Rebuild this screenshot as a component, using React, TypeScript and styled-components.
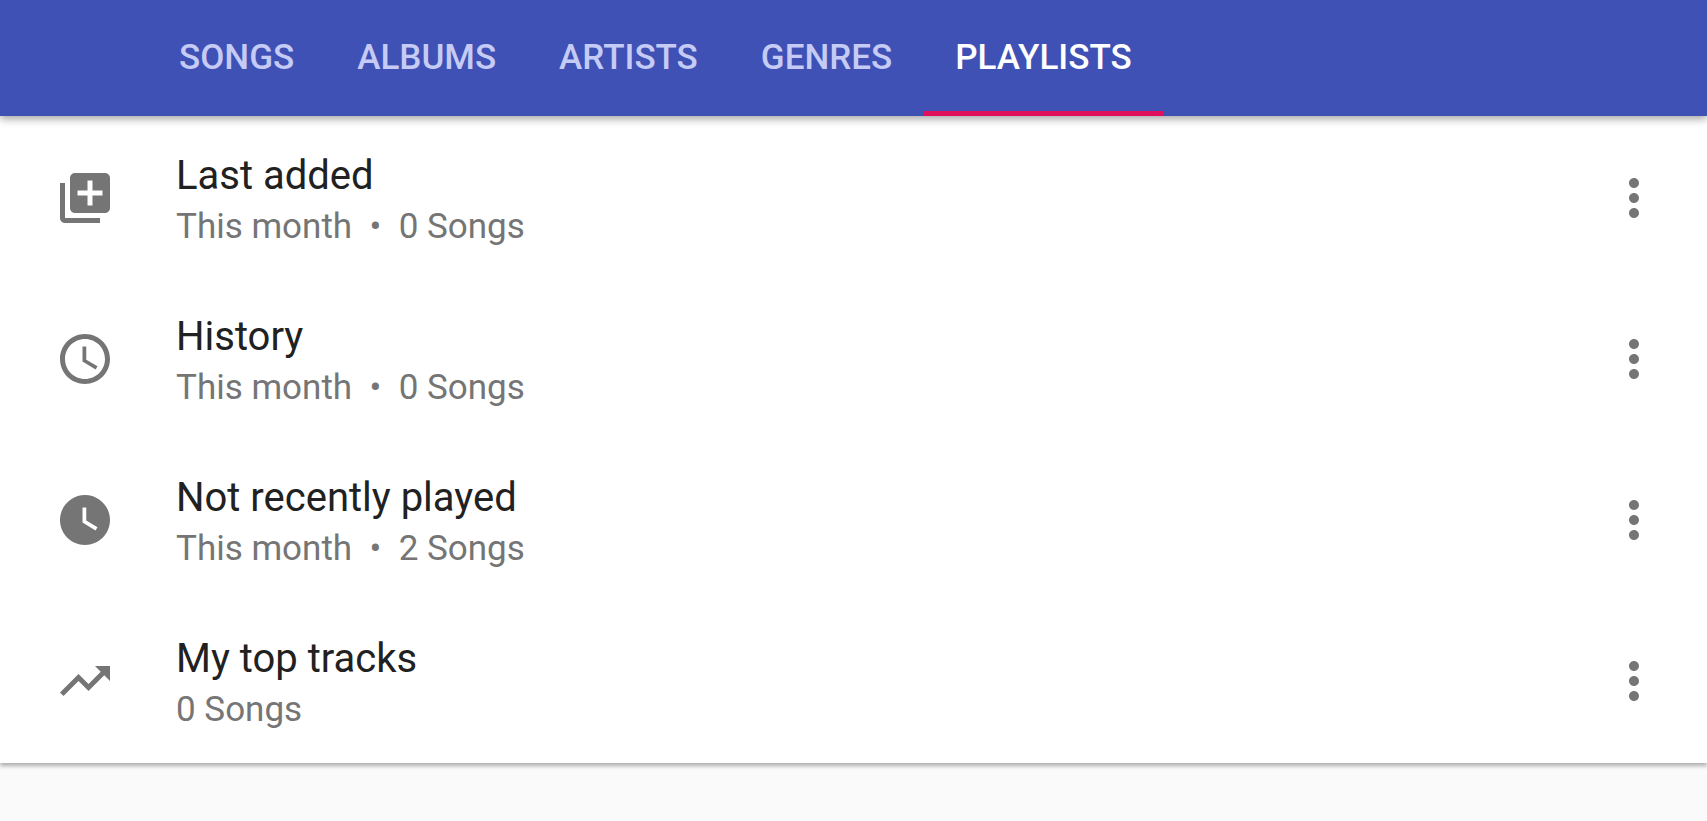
import React, { useState } from 'react';
import styled, { createGlobalStyle } from 'styled-components';

const GlobalStyle = createGlobalStyle`
  *, *::before, *::after { box-sizing: border-box; }
  body {
    margin: 0;
    background: #fafafa;
    font-family: Roboto, "Liberation Sans", sans-serif;
    color: #212121;
  }
`;

const Page = styled.div`
  min-height: 100vh;
  background: #fafafa;
`;

const Header = styled.header`
  position: relative;
  z-index: 2;
  background: #3f51b5;
  box-shadow: 0 3px 8px rgba(0, 0, 0, 0.36);
`;

const TabBar = styled.nav`
  display: flex;
  gap: 1px;
  height: 116px;
  padding-left: 148px;
`;

const Tab = styled.button<{ $active: boolean }>`
  padding: 4px 31px 0;
  border: 0;
  border-bottom: 5px solid ${({ $active }) => ($active ? '#e0105c' : 'transparent')};
  background: none;
  color: ${({ $active }) => ($active ? '#ffffff' : '#c5cbf5')};
  font: 500 35px/40px Roboto, "Liberation Sans", sans-serif;
  text-transform: uppercase;
  cursor: pointer;
`;

const List = styled.ul`
  position: relative;
  z-index: 1;
  margin: 0;
  padding: 1px 0 2px;
  list-style: none;
  background: #ffffff;
  box-shadow: 0 3px 4px rgba(0, 0, 0, 0.3);
`;

const Row = styled.li`
  display: flex;
  align-items: center;
  height: 161px;
  padding: 0 43px 0 55px;
`;

const Icon = styled.svg`
  display: block;
  flex: none;
  width: 60px;
  height: 60px;
  fill: #757575;
`;

const RowText = styled.div`
  flex: 1;
  min-width: 0;
  padding-left: 61px;
`;

const Title = styled.div`
  font-size: 40px;
  line-height: 58px;
`;

const Subtitle = styled.div`
  font-size: 35px;
  line-height: 44px;
  color: #757575;
  white-space: pre;
`;

const MenuButton = styled.button`
  padding: 0;
  border: 0;
  background: none;
  cursor: pointer;
`;

const TABS = ['Songs', 'Albums', 'Artists', 'Genres', 'Playlists'];

const PLAYLISTS = [
  {
    title: 'Last added',
    detail: 'This month\u00a0 •\u00a0 0 Songs',
    icon: 'M4 6H2v14c0 1.1.9 2 2 2h14v-2H4V6zm16-4H8c-1.1 0-2 .9-2 2v12c0 1.1.9 2 2 2h12c1.1 0 2-.9 2-2V4c0-1.1-.9-2-2-2zm-1 9h-4v4h-2v-4H9V9h4V5h2v4h4v2z',
  },
  {
    title: 'History',
    detail: 'This month\u00a0 •\u00a0 0 Songs',
    icon: 'M11.99 2C6.47 2 2 6.48 2 12s4.47 10 9.99 10C17.52 22 22 17.52 22 12S17.52 2 11.99 2zM12 20c-4.42 0-8-3.58-8-8s3.58-8 8-8 8 3.58 8 8-3.58 8-8 8zm.5-13H11v6l5.25 3.15.75-1.23-4.5-2.67z',
  },
  {
    title: 'Not recently played',
    detail: 'This month\u00a0 •\u00a0 2 Songs',
    icon: 'M12 2C6.5 2 2 6.5 2 12s4.5 10 10 10 10-4.5 10-10S17.5 2 12 2zm4.2 14.2L11 13V7h1.5v5.2l4.5 2.7-.8 1.3z',
  },
  {
    title: 'My top tracks',
    detail: '0 Songs',
    icon: 'M16 6l2.29 2.29-4.88 4.88-4-4L2 16.59 3.41 18l6-6 4 4 6.3-6.29L22 12V6z',
  },
];

const MORE =
  'M12 8c1.1 0 2-.9 2-2s-.9-2-2-2-2 .9-2 2 .9 2 2 2zm0 2c-1.1 0-2 .9-2 2s.9 2 2 2 2-.9 2-2-.9-2-2-2zm0 6c-1.1 0-2 .9-2 2s.9 2 2 2 2-.9 2-2-.9-2-2-2z';

export default function App() {
  const [active, setActive] = useState('Playlists');
  return (
    <Page>
      <GlobalStyle />
      <Header>
        <TabBar>
          {TABS.map((name) => (
            <Tab key={name} type="button" $active={name === active} onClick={() => setActive(name)}>
              {name}
            </Tab>
          ))}
        </TabBar>
      </Header>
      <main>
        <List>
          {PLAYLISTS.map(({ title, detail, icon }) => (
            <Row key={title}>
              <Icon viewBox="0 0 24 24" aria-hidden="true">
                <path d={icon} />
              </Icon>
              <RowText>
                <Title>{title}</Title>
                <Subtitle>{detail}</Subtitle>
              </RowText>
              <MenuButton type="button" aria-label={`More options for ${title}`}>
                <Icon viewBox="0 0 24 24" aria-hidden="true">
                  <path d={MORE} />
                </Icon>
              </MenuButton>
            </Row>
          ))}
        </List>
      </main>
    </Page>
  );
}
